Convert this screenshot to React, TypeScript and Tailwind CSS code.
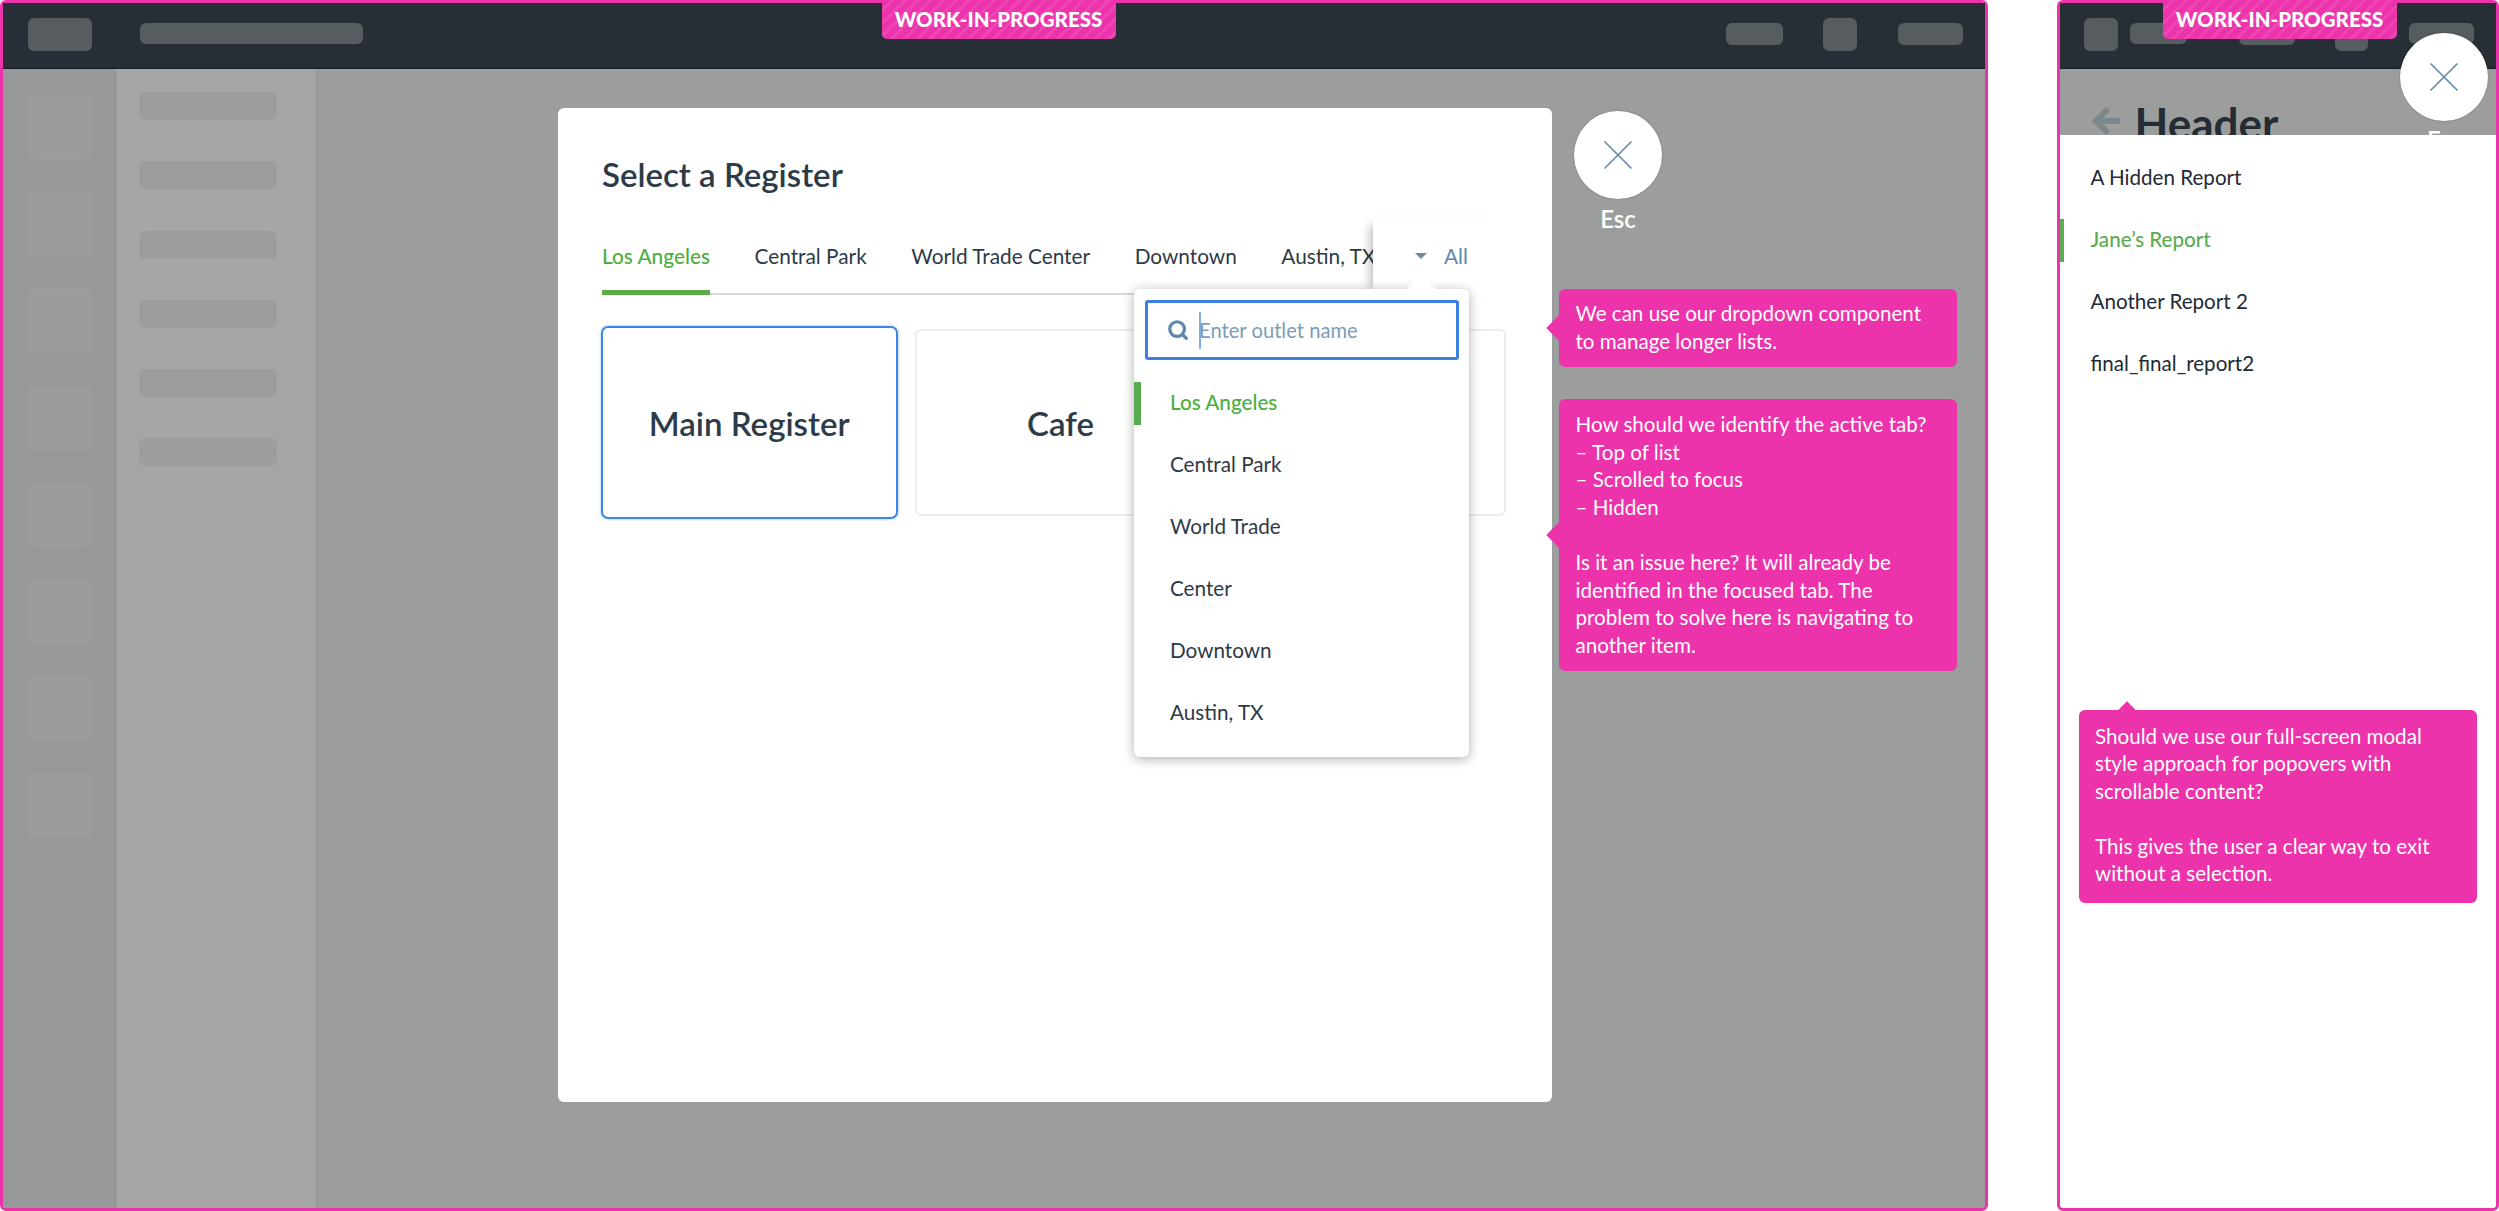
import { ReactNode } from "react";
import { Search, X } from "lucide-react";

const tabs = ["Central Park", "World Trade Center", "Downtown", "Austin, TX"];
const outlets = ["Central Park", "World Trade", "Center", "Downtown", "Austin, TX"];
const reports = ["Another Report 2", "final_final_report2"];

function Block({ className }: { className: string }) {
  return <div className={`rounded-[6px] bg-[#565c60] ${className}`} />;
}

function WipBadge({ className }: { className: string }) {
  return (
    <div
      className={`absolute top-[-3px] h-[38.5px] w-[234px] rounded-b-[5px] flex items-center justify-center text-[20.5px] font-black text-white leading-none bg-[#ec33ab] bg-[repeating-linear-gradient(135deg,#ec33ab_0px,#ec33ab_6px,#ee45b3_6px,#ee45b3_9px)] ${className}`}
    >
      WORK-IN-PROGRESS
    </div>
  );
}

function CloseButton({ className }: { className: string }) {
  return (
    <div
      className={`absolute w-[88px] h-[88px] rounded-full bg-white flex items-center justify-center shadow-[0_0_2px_rgba(0,0,0,0.3)] ${className}`}
    >
      <X size={52} strokeWidth={0.8} className="text-[#6a8cab]" />
    </div>
  );
}

function Note({ className, arrow, children }: { className: string; arrow: string; children: ReactNode }) {
  return (
    <div
      className={`absolute rounded-[6px] bg-[#ec33ab] text-white text-[20.6px] leading-[27.6px] whitespace-pre-line ${className}`}
    >
      <span className={`absolute w-[18px] h-[18px] rotate-45 bg-[#ec33ab] ${arrow}`} />
      <span className="relative">{children}</span>
    </div>
  );
}

export default function App() {
  return (
    <div className="w-[2499px] h-[1211px] flex justify-between overflow-hidden bg-white font-['Lato',sans-serif]">
      {/* Main desktop frame */}
      <div className="relative w-[1988px] h-full border-[3px] border-[#ec33ab] rounded-[6px] flex flex-col bg-[#9c9e9d]">
        <div className="h-[66px] shrink-0 bg-[#272e35] border-b border-[#0d1d2b] flex items-start pt-[15px] pl-[24.5px] pr-[22px]">
          <Block className="w-[64px] h-[33px]" />
          <Block className="w-[223px] h-[21px] ml-[48px] mt-[5px]" />
          <Block className="w-[57px] h-[22px] ml-auto mt-[5px]" />
          <Block className="w-[34px] h-[33px] ml-[40px]" />
          <Block className="w-[65px] h-[22px] ml-[41px] mt-[5px]" />
        </div>

        <div className="flex-1 flex min-h-0">
          <div className="w-[114px] bg-[#97989a] pl-[24.5px] pt-[26px] flex flex-col gap-[33px]">
            {Array.from({ length: 8 }).map((_, i) => (
              <div key={i} className="w-[64px] h-[64px] rounded-[5px] bg-[#9b9d9c]" />
            ))}
          </div>
          <div className="w-[198px] bg-[#a6a6a6] pl-[22px] pt-[23px] flex flex-col gap-[41.3px]">
            {Array.from({ length: 6 }).map((_, i) => (
              <div key={i} className="w-[138px] h-[28px] rounded-[6px] bg-[#9c9e9d]" />
            ))}
          </div>
        </div>

        {/* Modal */}
        <div className="absolute left-[555px] top-[105px] w-[994px] h-[994px] rounded-[6px] bg-white pl-[44px]">
          <h1 className="pt-[43px] text-[33px] leading-[46px] font-semibold text-[#2d3b48]">Select a Register</h1>

          <div className="relative mt-[45px] w-[906px] h-[53px] border-b-2 border-[#d4dadd] flex gap-[44.6px] text-[20.8px] leading-[28px] text-[#2e3a46] whitespace-nowrap">
            <div className="h-[53px] border-b-[5px] border-[#5aac44] text-[#4caf3e] font-medium">Los Angeles</div>
            {tabs.map((t) => (
              <div key={t}>{t}</div>
            ))}
            <div className="absolute left-[771px] top-[-25px] w-[135px] h-[80px] bg-white shadow-[-10px_0_10px_-8px_rgba(0,0,0,0.3)]">
              <span className="absolute left-[41.5px] top-[36px] w-0 h-0 border-x-[6.5px] border-x-transparent border-t-[6.5px] border-t-[#6a8cab]" />
              <span className="absolute left-[71px] top-[25px] text-[#5f86ac]">All</span>
            </div>
          </div>

          <div className="flex items-start gap-[16.5px] mt-[34px] pl-[1px]">
            <div className="w-[297.5px] h-[192.7px] -ml-[2.5px] -mt-[3px] pt-[3px] rounded-[7px] border-[2px] border-[#3b86e6] shadow-[0_0_3px_#8fbdf0] flex items-center justify-center text-[33px] font-semibold text-[#2d3b48]">
              Main Register
            </div>
            <div className="w-[292px] h-[187px] pt-[2px] rounded-[6px] border-2 border-[#ededed] flex items-center justify-center text-[33px] font-semibold text-[#2d3b48]">
              Cafe
            </div>
            <div className="w-[280px] h-[187px] ml-[3px] rounded-[6px] border-2 border-[#ededed]" />
          </div>

          {/* Outlet dropdown */}
          <div className="absolute left-[575.5px] top-[181px] w-[335px] h-[468px] rounded-[6px] bg-white shadow-[0_2px_12px_rgba(0,0,0,0.32)] pl-[11.5px] pr-[10px] pt-[11px]">
            <span className="absolute left-[277px] top-[-10px] w-[20px] h-[20px] rotate-45 bg-white" />
            <div className="relative h-[60px] rounded-[3px] border-[3px] border-[#3b7fdf] flex items-center pl-[19px] text-[20.2px] text-[#7c9cba]">
              <Search size={22} strokeWidth={3.5} className="text-[#5f86ac] mr-[10px]" />
              <span className="w-[2px] h-[37px] bg-[#7fb0e6] mr-[-2px]" />
              Enter outlet name
            </div>
            <div className="mt-[12px] -ml-[11.5px] -mr-[10px] text-[20.7px] text-[#2e3a46]">
              <div className="h-[62px] flex items-center pl-[36.5px] text-[#4caf3e] font-medium relative">
                <span className="absolute left-0 top-[9.5px] w-[7px] h-[43px] bg-[#5aac50]" />
                Los Angeles
              </div>
              {outlets.map((o) => (
                <div key={o} className="h-[62px] flex items-center pl-[36.5px]">
                  {o}
                </div>
              ))}
            </div>
          </div>
        </div>

        <CloseButton className="left-[1571px] top-[108px]" />
        <div className="absolute left-[1570px] w-[90px] top-[202px] text-center text-[24px] leading-[28px] font-semibold text-white">
          Esc
        </div>

        <Note className="left-[1556px] top-[286px] w-[398px] h-[78px] pl-[16.5px] pt-[11px]" arrow="left-[-9px] top-[30px]">
          {"We can use our dropdown component\nto manage longer lists."}
        </Note>
        <Note className="left-[1556px] top-[396px] w-[398px] h-[272px] pl-[16.5px] pt-[12px]" arrow="left-[-9px] top-[127px]">
          {"How should we identify the active tab?\n– Top of list\n– Scrolled to focus\n– Hidden\n\nIs it an issue here? It will already be\nidentified in the focused tab. The\nproblem to solve here is navigating to\nanother item."}
        </Note>

        <WipBadge className="left-[878.5px]" />
      </div>

      {/* Mobile frame */}
      <div className="relative w-[442px] h-full border-[3px] border-[#ec33ab] rounded-[6px] flex flex-col bg-white">
        <div className="h-[66px] shrink-0 bg-[#272e35] border-b border-[#0d1d2b] flex items-start pt-[15px] pl-[24px]">
          <Block className="w-[34px] h-[33px]" />
          <Block className="w-[57px] h-[21px] ml-[12px] mt-[5px]" />
          <Block className="w-[56px] h-[22px] ml-[52px] mt-[5px]" />
          <Block className="w-[33px] h-[33px] ml-[40px]" />
          <Block className="w-[65px] h-[21px] ml-[41px] mt-[5px]" />
        </div>
        <div className="relative h-[66px] shrink-0 bg-[#9c9e9d] overflow-hidden flex items-start pl-[31.5px] pt-[31px]">
          <svg width="29" height="30" viewBox="0 0 29 30" className="mt-[6px]">
            <path d="M16 3 L4 15 L16 27 M4 15 H28" fill="none" stroke="#7c878c" strokeWidth="6" />
          </svg>
          <span className="ml-[14px] text-[44px] leading-[46px] font-bold text-[#252d34]">Header</span>
          <span className="absolute left-[367px] top-[57px] text-[24px] leading-[28px] font-semibold text-white">Esc</span>
        </div>

        <div className="flex-1 text-[20.6px] text-[#1f2a37] pt-[11.5px]">
          <div className="h-[62px] flex items-center pl-[30.5px]">A Hidden Report</div>
          <div className="relative h-[62px] flex items-center pl-[30.5px] text-[#5aac50] font-medium">
            <span className="absolute left-0 top-[10.5px] w-[4px] h-[43px] bg-[#5aac50]" />
            Jane’s Report
          </div>
          {reports.map((r) => (
            <div key={r} className="h-[62px] flex items-center pl-[30.5px]">
              {r}
            </div>
          ))}
        </div>

        <CloseButton className="left-[340px] top-[30px]" />
        <Note className="left-[19px] top-[706.5px] w-[398px] h-[193.5px] pl-[16px] pt-[13px]" arrow="left-[39px] top-[-5px]">
          {"Should we use our full-screen modal\nstyle approach for popovers with\nscrollable content?\n\nThis gives the user a clear way to exit\nwithout a selection."}
        </Note>
        <WipBadge className="left-[102.5px]" />
      </div>
    </div>
  );
}
